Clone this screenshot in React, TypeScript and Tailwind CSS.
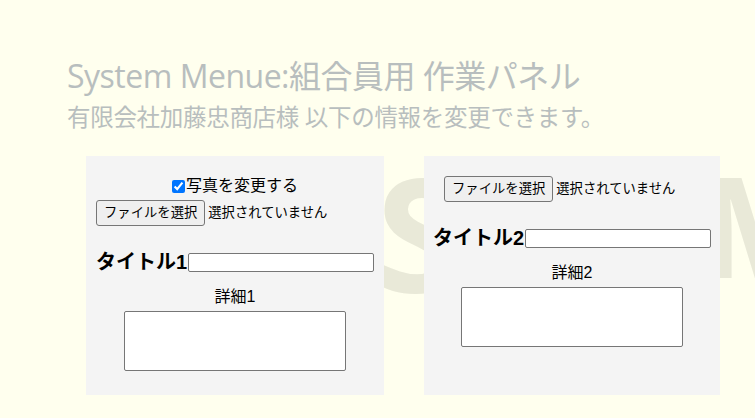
const FileRow = ({ className = "" }: { className?: string }) => {
  return (
    <div className={`flex items-center text-[13.33px] ${className}`}>
      <button className="h-[26px] px-[7px] bg-[#efefef] border border-[#767676] rounded-[3px] text-black leading-none">
        ファイルを選択
      </button>
      <span className="ml-[3px] text-black">選択されていません</span>
    </div>
  );
};

const Panel = ({ no, photo }: { no: number; photo?: boolean }) => {
  return (
    <div className="relative z-10 bg-[#f4f4f4] pt-5 pb-6 flex flex-col">
      {photo && (
        <div className="h-5 mb-1 flex items-center justify-center text-[16px] text-black">
          <input type="checkbox" defaultChecked className="w-[13px] h-[13px] m-0 mr-[1px] accent-[#0075ff]" />
          <span>写真を変更する</span>
        </div>
      )}
      <FileRow className={photo ? "pl-[10px]" : "pl-5"} />
      <div className={`mt-[22px] h-7 flex items-center ${photo ? "pl-[10px]" : "pl-[9px]"}`}>
        <span className="text-[20px] font-bold text-black leading-none">タイトル{no}</span>
        <input type="text" className="ml-[1px] w-[186px] h-[19px] bg-white border border-[#767676] rounded-[2px]" />
      </div>
      <div className="mt-[11px] text-center text-[16px] leading-5 text-black">詳細{no}</div>
      <div className="mt-[4px] flex justify-center">
        <textarea className="w-[222px] h-[60px] bg-white border border-[#767676] rounded-[2px] resize-none" />
      </div>
    </div>
  );
};

const App = () => {
  return (
    <div className="min-h-screen bg-[#ffffee] overflow-hidden" style={{ fontFamily: '"Liberation Sans", "Noto Sans CJK JP", sans-serif' }}>
      <div className="pl-[67px] pt-[56px] text-[#b8bebe]" style={{ fontFamily: '"Open Sans", "Noto Sans CJK JP", sans-serif' }}>
        <h1 className="text-[32px] leading-[40px] tracking-[-0.5px] font-normal">System Menue:組合員用 作業パネル</h1>
        <p className="mt-[5px] text-[23.5px] leading-[32px] tracking-[-0.3px]">有限会社加藤忠商店様 以下の情報を変更できます。</p>
      </div>
      <div className="relative mt-[23px] pl-[86px] flex gap-10">
        <span className="absolute left-[376px] top-[-4px] z-0 text-[158px] font-bold leading-none text-[#e9e9d8] select-none" style={{ fontFamily: '"Open Sans", sans-serif' }}>
          S
        </span>
        <span className="absolute left-[700px] top-[-2px] z-0 text-[140px] font-bold leading-none text-[#e9e9d8] select-none" style={{ fontFamily: '"Open Sans", sans-serif' }}>
          M
        </span>
        <div className="w-[298px] flex">
          <div className="w-full">
            <Panel no={1} photo />
          </div>
        </div>
        <div className="w-[296px] flex">
          <div className="w-full flex flex-col">
            <div className="flex-1 flex flex-col bg-[#f4f4f4] relative z-10">
              <Panel no={2} />
            </div>
          </div>
        </div>
      </div>
    </div>
  );
};

export default App;
